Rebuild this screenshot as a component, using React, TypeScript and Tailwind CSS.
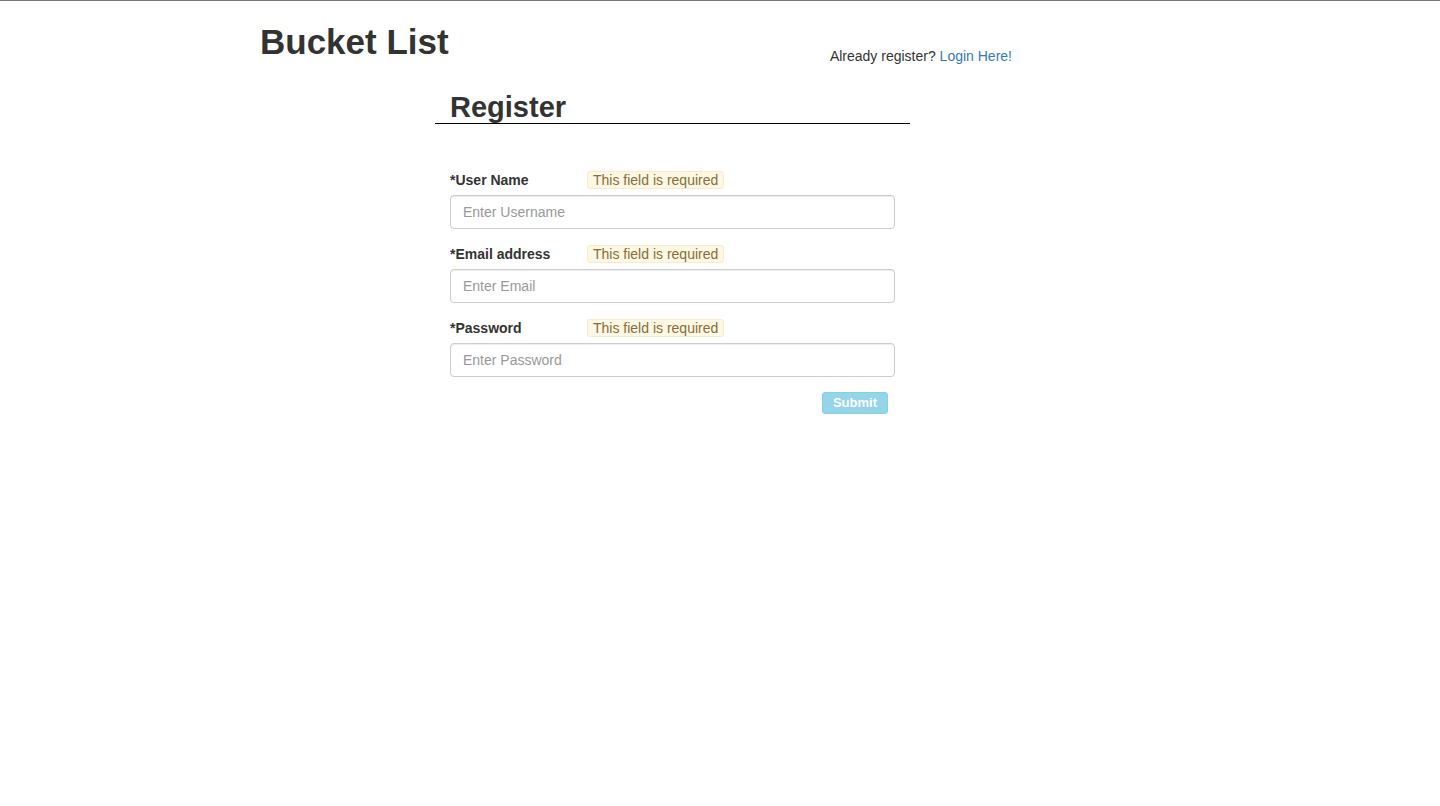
import React from "react";

const fields = [
  { id: "username", label: "*User Name", type: "text", placeholder: "Enter Username" },
  { id: "email", label: "*Email address", type: "email", placeholder: "Enter Email" },
  { id: "password", label: "*Password", type: "password", placeholder: "Enter Password" },
];

function Field({ id, label, type, placeholder }: (typeof fields)[number]) {
  return (
    <div className="mb-[15px]">
      <div className="mb-[5px] flex h-5 items-center">
        <label htmlFor={id} className="w-[137px] font-bold">
          {label}
        </label>
        <span
          id={`${id}-error`}
          className="rounded-[3px] border border-[#faebcc] bg-[#fcf8e3] px-[5px] leading-4 text-[#8a6d3b]"
        >
          This field is required
        </span>
      </div>
      <input
        id={id}
        type={type}
        placeholder={placeholder}
        aria-describedby={`${id}-error`}
        className="block h-[34px] w-full rounded border border-[#ccc] bg-white px-3 py-1.5 shadow-[inset_0_1px_1px_rgba(0,0,0,0.075)] placeholder:text-[#999]"
      />
    </div>
  );
}

export default function App() {
  return (
    <div className="min-h-screen border-t border-[#777] bg-white font-['Liberation_Sans',Arial,sans-serif] text-sm leading-5 text-[#333]">
      <div className="mx-auto w-full max-w-[950px]">
        <header className="flex items-start justify-between pr-[183px] pl-[15px] pt-5">
          <h1 className="text-[35px] leading-[42px] font-bold">Bucket List</h1>
          <p className="mt-[25px]">
            Already register?{" "}
            <a href="#login" className="text-[#337ab7]">
              Login Here!
            </a>
          </p>
        </header>
        <main className="mt-[25px] ml-[20%] w-1/2">
          <h2 className="border-b border-black px-[15px] text-[29px] leading-8 font-bold">Register</h2>
          <form className="mt-[46px] px-[15px]" onSubmit={(e) => e.preventDefault()}>
            {fields.map((f) => (
              <Field key={f.id} {...f} />
            ))}
            <div className="flex justify-end pr-[7px]">
              <button
                type="submit"
                disabled
                className="h-[22px] rounded-[3px] border border-[#46b8da] bg-[#5bc0de] px-2.5 text-[13px] leading-5 font-bold text-white opacity-65"
              >
                Submit
              </button>
            </div>
          </form>
        </main>
      </div>
    </div>
  );
}
